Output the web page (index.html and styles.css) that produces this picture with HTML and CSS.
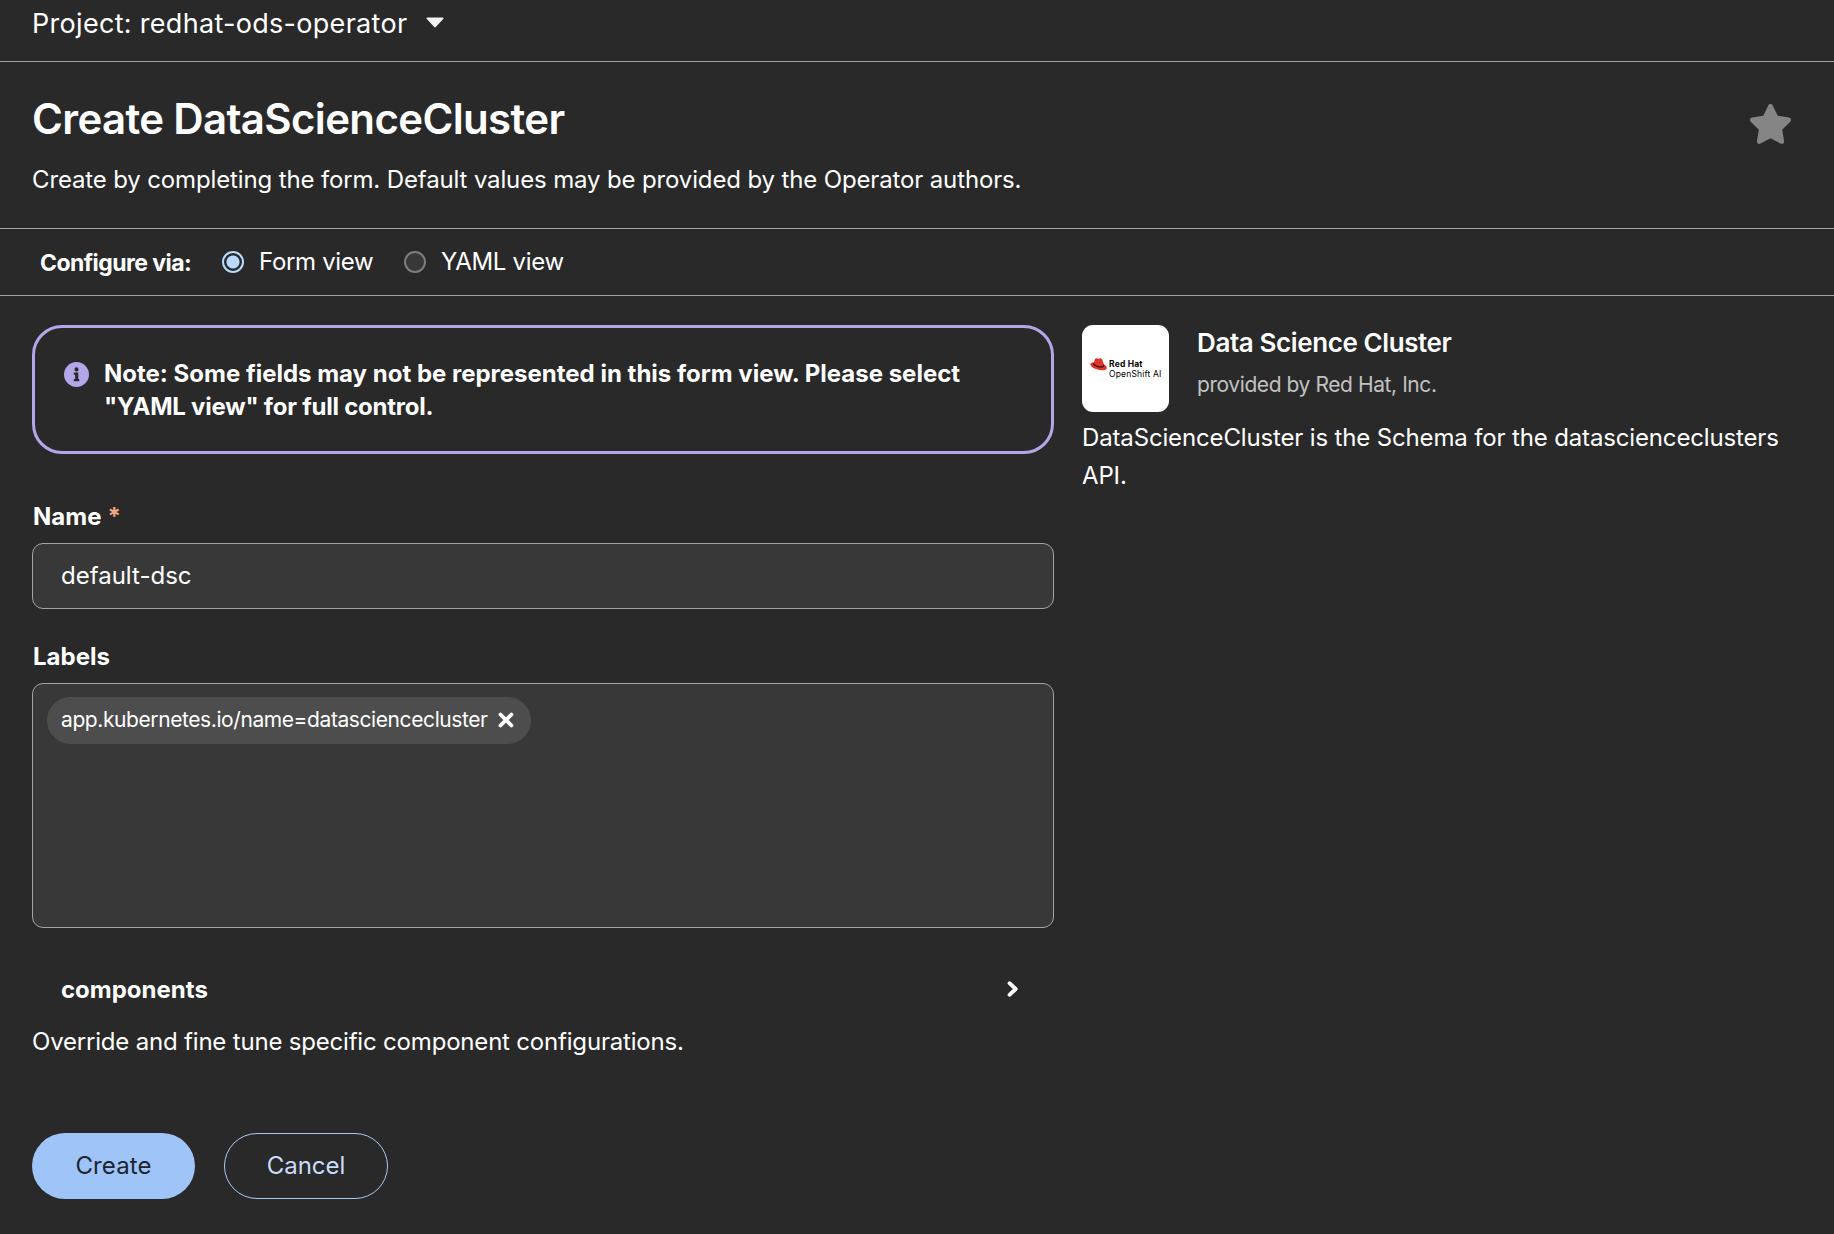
FILE: index.html
```
<!DOCTYPE html>
<html lang="en">
<head>
  <meta charset="UTF-8" />
  <meta name="viewport" content="width=device-width, initial-scale=1.0" />
  <title>Create DataScienceCluster</title>
  <link rel="stylesheet" href="styles.css">
</head>
<body>
  <div class="project-bar">
    <span class="project-name">Project: redhat-ods-operator</span>
    <svg class="caret" viewBox="0 0 18 11"><path d="M1.4 0.5h15.2c.9 0 1.2 1 .6 1.6L9.8 10a1.1 1.1 0 0 1-1.6 0L.8 2.1C.2 1.5.5.5 1.4.5z"/></svg>
  </div>

  <header class="page-header">
    <div>
      <h1>Create DataScienceCluster</h1>
      <p class="subtitle">Create by completing the form. Default values may be provided by the Operator authors.</p>
    </div>
    <svg class="star" viewBox="24 0 528 512"><path d="M316.9 18C311.600 7 300.400 0 288.100 0s-23.400 7-28.800 18L195 150.300 51.400 171.500c-12 1.800-22 10.200-25.700 21.700s-.7 24.200 7.900 32.700L137.800 329 113.200 474.700c-2 12 3 24.200 12.900 31.300s23 8 33.800 2.300l128.300-68.500 128.300 68.500c10.800 5.700 23.900 4.900 33.800-2.300s14.900-19.300 12.900-31.300L438.500 329 542.700 225.900c8.600-8.500 11.700-21.200 7.900-32.700s-13.700-19.900-25.700-21.700L381.200 150.300 316.900 18z"/></svg>
  </header>

  <div class="configure">
    <span class="configure-label">Configure via:</span>
    <label class="option form-view"><input type="radio" name="view" checked><span>Form view</span></label>
    <label class="option yaml-view"><input type="radio" name="view"><span>YAML view</span></label>
  </div>

  <main class="content">
    <form class="form" onsubmit="return false">
      <div class="alert">
        <svg class="info" viewBox="0 0 512 512"><path fill-rule="evenodd" d="M256 0a256 256 0 1 0 0 512a256 256 0 1 0 0-512zM256 110a42 42 0 1 0 0 84a42 42 0 1 0 0-84zM200 216h92v132h20v44H200v-44h28v-88h-28z"/></svg>
        <p>Note: Some fields may not be represented in this form view. Please select<br><span class="alert-end">"YAML view" for full control.</span></p>
      </div>

      <label class="field-label name-label" for="name">Name<span class="required">*</span></label>
      <input class="text-input" id="name" type="text" value="default-dsc">

      <div class="field-label tags-label">Labels</div>
      <div class="tags">
        <span class="tag">
          <span>app.kubernetes.io/name=datasciencecluster</span>
          <svg class="close" viewBox="0 0 16 16"><path d="M2.500 2.500l11 11M13.500 2.500l-11 11"/></svg>
        </span>
      </div>

      <div class="group">
        <span>components</span>
        <svg class="chevron" viewBox="0 0 12 16"><path d="M2.500 2.200L8.700 8l-6.200 5.800"/></svg>
      </div>
      <p class="help">Override and fine tune specific component configurations.</p>

      <div class="actions">
        <button class="btn primary" type="submit">Create</button>
        <button class="btn secondary" type="button">Cancel</button>
      </div>
    </form>

    <aside class="side">
      <div class="provider">
        <div class="logo">
          <svg class="hat" viewBox="0 0 34 26">
            <path fill="#e0342b" d="M9.500 3.500C10.500.800 13 .200 15 1c1.500.6 2.600.4 4-.2 2.400-.9 4.800.500 5.900 3.200l2.600 8.300c4 1.900 6.700 5.100 6.100 8.200-.8 4-7.200 5-14.600 3.600C9.500 22.400.600 17.600.700 12.600c.1-2.700 3-3.800 6.800-3.600z"/>
            <path fill="#1a0a08" d="M7.500 9c-.3 3.400 4.500 6.600 10.400 7.600 4.700.8 9.300 0 9.600-4.300l1 3.100c-.9 3.600-6.200 4.300-11.100 3.300C11.300 17.500 5.600 14 6.500 11z"/>
          </svg>
          <div class="logo-text">
            <div class="logo-brand">Red Hat</div>
            <div class="logo-product">OpenShift AI</div>
          </div>
        </div>
        <div class="provider-text">
          <h2>Data Science Cluster</h2>
          <p class="vendor">provided by Red Hat, Inc.</p>
        </div>
      </div>
      <p class="about">DataScienceCluster is the Schema for the datascienceclusters API.</p>
    </aside>
  </main>
</body>
</html>
```
FILE: styles.css
```
* { box-sizing: border-box; }
body {
  font-family: Inter, "Liberation Sans", sans-serif;
  font-size: 24px;
  line-height: 36px;
  background: #292929;
  margin: 0;
  color: #ffffff;
}
h1, h2, p { margin: 0; }
.project-bar {
  display: flex;
  align-items: center;
  gap: 19px;
  height: 62px;
  padding: 0 32px 15px;
  border-bottom: 1px solid #a3a3a3;
}
.project-name {
  padding-top: 2px;
  font-size: 27px;
  letter-spacing: 0.3px;
}
.caret {
  width: 18px;
  height: 11px;
  margin-bottom: 1px;
  fill: #f2f2f2;
}
.page-header {
  display: flex;
  justify-content: space-between;
  height: 167px;
  padding: 30px 43px 0 32px;
  border-bottom: 1px solid #a3a3a3;
}
h1 {
  font-size: 42px;
  line-height: 54px;
  font-weight: 600;
  letter-spacing: -0.65px;
}
.subtitle {
  margin-top: 16px;
  letter-spacing: -0.14px;
}
.star {
  width: 41px;
  height: 40px;
  margin-top: 12px;
  fill: #858585;
}
.configure {
  display: flex;
  align-items: center;
  height: 67px;
  padding-left: 40px;
  border-bottom: 1px solid #a3a3a3;
}
.configure-label {
  width: 182px;
  padding-top: 2px;
  font-size: 23px;
  font-weight: bold;
  letter-spacing: -0.55px;
}
.option {
  display: flex;
  align-items: center;
  gap: 15px;
}
.form-view {
  width: 182px;
  letter-spacing: -0.33px;
}
.yaml-view { letter-spacing: -0.3px; }
input[type="radio"] {
  appearance: none;
  width: 22px;
  height: 22px;
  margin: 0;
  border: 2px solid #7d7d7d;
  border-radius: 50%;
  background: #383838;
}
input[type="radio"]:checked {
  border-color: #b9dafc;
  background: radial-gradient(circle, #b9dafc 6px, #292929 7px);
}
.content {
  display: grid;
  grid-template-columns: 1022px 710px;
  gap: 28px;
  padding: 29px 32px 0;
}
.form {
  display: flex;
  flex-direction: column;
}
.alert {
  display: flex;
  gap: 15px;
  height: 129px;
  padding: 29px 29px 28px;
  border: 3px solid #b6a6e9;
  border-radius: 30px;
  font-weight: bold;
  line-height: 33px;
}
.alert-end { letter-spacing: -0.23px; }
.info {
  width: 25px;
  height: 25px;
  margin-top: 5px;
  fill: #b6a6e9;
}
.field-label {
  padding-left: 1px;
  font-weight: bold;
}
.name-label { margin-top: 45px; }
.tags-label { margin-top: 30px; }
.required {
  margin-left: 6px;
  color: #f4a784;
}
.text-input {
  height: 66px;
  margin-top: 8px;
  padding: 0 28px 2px;
  border: 1px solid #a3a3a3;
  border-radius: 11px;
  background: #383838;
  color: #ffffff;
  font: inherit;
}
.tags {
  height: 245px;
  margin-top: 8px;
  padding: 13px 14px;
  border: 1px solid #a3a3a3;
  border-radius: 11px;
  background: #383838;
}
.tag {
  display: flex;
  align-items: center;
  justify-content: space-between;
  width: 484px;
  height: 47px;
  padding: 0 17px 2px 14px;
  border-radius: 24px;
  background: #4d4d4d;
  font-size: 21px;
  letter-spacing: -0.41px;
}
.close {
  width: 16px;
  height: 16px;
  fill: none;
  stroke: #ffffff;
  stroke-width: 3.8;
  stroke-linecap: round;
}
.group {
  display: flex;
  align-items: center;
  justify-content: space-between;
  margin-top: 44px;
  padding: 0 35px 0 29px;
  font-weight: bold;
}
.chevron {
  width: 12px;
  height: 16px;
  margin-bottom: 2px;
  fill: none;
  stroke: #ffffff;
  stroke-width: 3.8;
  stroke-linecap: round;
  stroke-linejoin: round;
}
.help {
  margin-top: 16px;
  letter-spacing: -0.19px;
}
.actions {
  display: flex;
  gap: 29px;
  margin-top: 73px;
}
.btn {
  height: 66px;
  padding: 0;
  border: none;
  border-radius: 33px;
  font: inherit;
  cursor: pointer;
}
.primary {
  width: 163px;
  background: #9fc5f8;
  color: #1c2530;
  letter-spacing: 0.1px;
}
.secondary {
  width: 164px;
  border: 1px solid #a5cbf2;
  background: none;
  color: #c9dcfa;
}
.provider {
  display: flex;
  gap: 28px;
}
.provider-text { padding-top: 1px; }
.logo {
  display: flex;
  gap: 2px;
  width: 87px;
  height: 87px;
  padding: 33px 0 0 8px;
  border-radius: 11px;
  background: #ffffff;
  color: #000000;
  white-space: nowrap;
}
.hat {
  width: 17px;
  height: 13px;
  flex: none;
}
.logo-text {
  padding-top: 2px;
  font-size: 8.5px;
  line-height: 9.5px;
  letter-spacing: 0.18px;
}
.logo-brand { font-weight: bold; }
h2 {
  font-size: 26px;
  line-height: 34px;
  font-weight: 600;
  letter-spacing: -0.4px;
}
.vendor {
  margin-top: 9px;
  font-size: 21px;
  line-height: 32px;
  color: #c2c2c2;
  letter-spacing: -0.42px;
}
.about {
  margin-top: 7px;
  line-height: 38px;
  letter-spacing: -0.15px;
}
```
